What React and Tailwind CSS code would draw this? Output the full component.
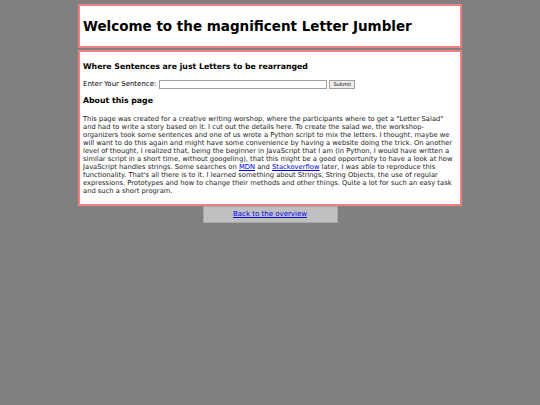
export default function App() {
  return (
    <div className="min-h-[405px] bg-[#808080] pt-[4px] font-['DejaVu_Sans',sans-serif] text-black">
      <div className="mx-auto flex h-[44px] w-[384px] items-center border-2 border-[#f08080] bg-white px-[3px]">
        <h1 className="text-[13.5px] font-bold leading-[16px]">Welcome to the magnificent Letter Jumbler</h1>
      </div>
      <div className="mx-auto mt-[2px] w-[384px] border-2 border-[#f08080] bg-white px-[3px] pt-[10px] pb-[9px]">
        <h2 className="text-[7.8px] font-bold leading-[10px]">Where Sentences are just Letters to be rearranged</h2>
        <form className="mt-[7px] flex h-[10px] items-center text-[7px] leading-[10px]" onSubmit={(e) => e.preventDefault()}>
          <label className="mr-[3px]">Enter Your Sentence:</label>
          <input type="text" className="h-[9px] w-[168px] border border-[#a0a0a0] bg-white" />
          <button type="submit" className="ml-[2px] h-[9px] border border-[#a0a0a0] bg-[#eeeeee] px-[3px] text-[5px] leading-[7px]">
            Submit
          </button>
        </form>
        <h3 className="mt-[7px] text-[7.8px] font-bold leading-[10px]">About this page</h3>
        <p className="mt-[9px] text-[6.75px] leading-[8px] text-[#222]">
          This page was created for a creative writing worshop, where the participants where to get a "Letter Salad" and had to write a story based on it. I cut out the details here. To create the salad we, the workshop-organizers took some sentences and one of us wrote a Python script to mix the letters. I thought, maybe we will want to do this again and might have some convenience by having a website doing the trick. On another level of thought, I realized that, being the beginner in JavaScript that I am (in Python, I would have written a similar script in a short time, without googeling), that this might be a good opportunity to have a look at how JavaScript handles strings. Some searches on{" "}
          <a href="#" className="text-[#0000ee] underline">MDN</a> and{" "}
          <a href="#" className="text-[#0000ee] underline">Stackoverflow</a> later, I was able to reproduce this functionality. That's all there is to it. I learned something about Strings, String Objects, the use of regular expressions, Prototypes and how to change their methods and other things. Quite a lot for such an easy task and such a short program.
        </p>
      </div>
      <div className="mx-auto flex h-[17px] w-[135px] items-center justify-center border border-[#a8a8a8] bg-[#c0c0c0] text-[7px]">
        <a href="#" className="text-[#0000ee] underline">Back to the overview</a>
      </div>
    </div>
  );
}
